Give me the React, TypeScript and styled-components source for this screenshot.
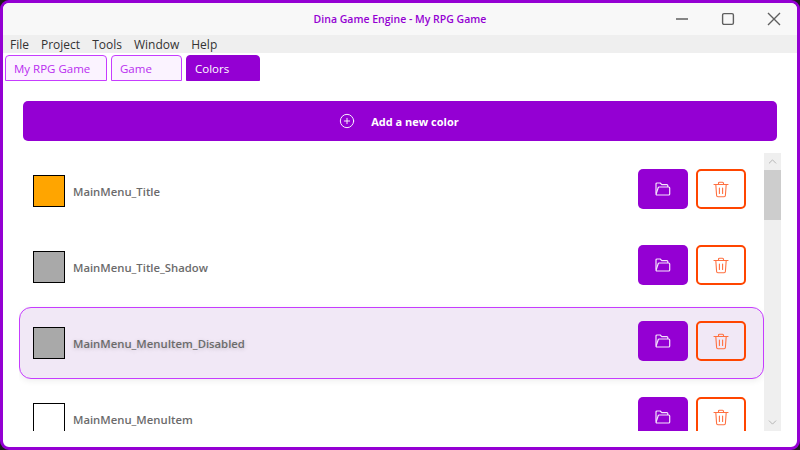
import React from 'react';
import styled, { createGlobalStyle } from 'styled-components';
import { CirclePlus, ChevronUp, ChevronDown } from 'lucide-react';

const PURPLE = '#9400d3';
const LILAC = '#c63cff';
const ORANGE = '#ff4500';

const colors = [
    { name: 'MainMenu_Title', swatch: '#ffa500' },
    { name: 'MainMenu_Title_Shadow', swatch: '#a9a9a9' },
    { name: 'MainMenu_MenuItem_Disabled', swatch: '#a9a9a9', hovered: true },
    { name: 'MainMenu_MenuItem', swatch: '#ffffff' },
];

const tabs = [
    { label: 'My RPG Game', width: 102 },
    { label: 'Game', width: 71 },
    { label: 'Colors', width: 74, active: true },
];

const menus = ['File', 'Project', 'Tools', 'Window', 'Help'];

const FolderIcon = () => (
    <svg width="16" height="14" viewBox="0 0 16 14" fill="none" stroke="currentColor" strokeWidth="1.2" strokeLinejoin="round">
        <path d="M1 11.5V2a1 1 0 0 1 1-1h3.2l1.6 1.6h5a1 1 0 0 1 1 1V5" />
        <path d="M1 12.2c.2.5.6.8 1.1.8h11.6a1 1 0 0 0 1-1V6a1 1 0 0 0-1-1H4.2a1 1 0 0 0-1 .8z" />
    </svg>
);

const TrashIcon = () => (
    <svg width="16" height="17" viewBox="0 0 16 17" fill="none" stroke="currentColor" strokeWidth="1.1" strokeLinecap="round" strokeLinejoin="round">
        <path d="M1 3.5h14" />
        <path d="M5.5 3.5V2.2a1 1 0 0 1 1-1h3a1 1 0 0 1 1 1v1.3" />
        <path d="M2.8 3.5l.8 11a1.3 1.3 0 0 0 1.3 1.2h6.2a1.3 1.3 0 0 0 1.3-1.2l.8-11" />
        <path d="M6.4 7v5.5M9.6 7v5.5" />
    </svg>
);

const App = () => {
    return (
        <>
            <GlobalStyle />
            <Desktop>
                <Window>
                    <TitleBar>
                        <Title>Dina Game Engine - My RPG Game</Title>
                        <WindowButtons>
                            <WindowButton>
                                <svg width="14" height="14" viewBox="0 0 14 14">
                                    <path d="M1 7h12" stroke="#5f5f5f" strokeWidth="1.4" />
                                </svg>
                            </WindowButton>
                            <WindowButton>
                                <svg width="14" height="14" viewBox="0 0 14 14">
                                    <rect x="1.6" y="1.6" width="10.8" height="10.8" rx="1.4" fill="none" stroke="#5f5f5f" strokeWidth="1.4" />
                                </svg>
                            </WindowButton>
                            <WindowButton>
                                <svg width="14" height="14" viewBox="0 0 14 14">
                                    <path d="M1 1l12 12M13 1L1 13" stroke="#5f5f5f" strokeWidth="1.4" />
                                </svg>
                            </WindowButton>
                        </WindowButtons>
                    </TitleBar>
                    <MenuBar>
                        {menus.map((item) => (
                            <MenuItem key={item}>{item}</MenuItem>
                        ))}
                    </MenuBar>
                    <TabStrip>
                        {tabs.map((tab) => (
                            <Tab key={tab.label} $width={tab.width} $active={tab.active}>
                                {tab.label}
                            </Tab>
                        ))}
                    </TabStrip>
                    <Content>
                        <AddButton>
                            <CirclePlus size={16} strokeWidth={1.4} />
                            <span>Add a new color</span>
                        </AddButton>
                        <ListArea>
                            <List>
                                {colors.map((color) => (
                                    <Row key={color.name} $hovered={color.hovered}>
                                        <Swatch $color={color.swatch} />
                                        <ColorName $hovered={color.hovered}>{color.name}</ColorName>
                                        <OpenButton>
                                            <FolderIcon />
                                        </OpenButton>
                                        <DeleteButton>
                                            <TrashIcon />
                                        </DeleteButton>
                                    </Row>
                                ))}
                            </List>
                            <ScrollBar>
                                <ScrollArrow>
                                    <ChevronUp size={13} strokeWidth={1.5} />
                                </ScrollArrow>
                                <ScrollThumb />
                                <ScrollTrack />
                                <ScrollArrow>
                                    <ChevronDown size={13} strokeWidth={1.5} />
                                </ScrollArrow>
                            </ScrollBar>
                        </ListArea>
                    </Content>
                </Window>
            </Desktop>
        </>
    );
};

export default App;

const GlobalStyle = createGlobalStyle`
    html, body {
        margin: 0;
        padding: 0;
        width: 800px;
        height: 450px;
        overflow: hidden;
        background: #1c1c1c;
    }
    * {
        box-sizing: border-box;
    }
`;

const Desktop = styled.div`
    width: 800px;
    height: 450px;
    background: #1c1c1c;
    font-family: 'Open Sans', 'Noto Sans', sans-serif;
`;

const Window = styled.div`
    width: 800px;
    height: 450px;
    display: flex;
    flex-direction: column;
    border: 3px solid ${PURPLE};
    border-radius: 9px;
    background: #ffffff;
    overflow: hidden;
`;

const TitleBar = styled.div`
    height: 32px;
    flex: none;
    position: relative;
    display: flex;
    align-items: center;
    justify-content: center;
    background: #f8f8f8;
`;

const Title = styled.div`
    font-size: 10.5px;
    font-weight: 600;
    color: ${PURPLE};
`;

const WindowButtons = styled.div`
    position: absolute;
    right: 0;
    top: 0;
    display: flex;
`;

const WindowButton = styled.div`
    width: 46px;
    height: 32px;
    display: flex;
    align-items: center;
    justify-content: center;
`;

const MenuBar = styled.div`
    height: 18px;
    flex: none;
    display: flex;
    align-items: center;
    padding-left: 1px;
    background: #efefef;
`;

const MenuItem = styled.div`
    padding: 0 6px;
    font-size: 12px;
    color: #333333;
`;

const TabStrip = styled.div`
    height: 28px;
    flex: none;
    display: flex;
    align-items: flex-end;
    gap: 4px;
    padding-left: 2px;
`;

const Tab = styled.div<{ $width: number; $active?: boolean }>`
    width: ${(p) => p.$width}px;
    height: 26px;
    display: flex;
    align-items: center;
    padding-left: 8px;
    font-size: 11.5px;
    border: 1px solid ${(p) => (p.$active ? PURPLE : LILAC)};
    border-radius: 4px 4px 0 0;
    background: ${(p) => (p.$active ? PURPLE : '#fbf3ff')};
    color: ${(p) => (p.$active ? '#ffffff' : '#b92cf0')};
`;

const Content = styled.div`
    flex: 1;
    min-height: 0;
    display: flex;
    flex-direction: column;
    padding: 20px 16px 16px 16px;
`;

const AddButton = styled.div`
    height: 40px;
    flex: none;
    margin: 0 4px;
    padding-right: 2px;
    display: flex;
    align-items: center;
    justify-content: center;
    gap: 16px;
    border-radius: 5px;
    background: ${PURPLE};
    color: #ffffff;
    font-size: 11px;
    font-weight: 700;
`;

const ListArea = styled.div`
    flex: 1;
    min-height: 0;
    margin-top: 12px;
    display: flex;
`;

const List = styled.div`
    flex: 1;
    min-width: 0;
    overflow: hidden;
    display: flex;
    flex-direction: column;
    gap: 4px;
    padding-top: 2px;
`;

const Row = styled.div<{ $hovered?: boolean }>`
    height: 72px;
    flex: none;
    display: flex;
    align-items: center;
    padding: 0 17px 0 13px;
    border: 1px solid ${(p) => (p.$hovered ? LILAC : 'transparent')};
    border-radius: 12px;
    background: ${(p) => (p.$hovered ? '#f1e8f6' : 'transparent')};
    box-shadow: ${(p) => (p.$hovered ? '0 2px 6px rgba(0, 0, 0, 0.07)' : 'none')};
`;

const Swatch = styled.div<{ $color: string }>`
    width: 32px;
    height: 32px;
    flex: none;
    border: 1px solid #000000;
    background: ${(p) => p.$color};
`;

const ColorName = styled.div<{ $hovered?: boolean }>`
    flex: 1;
    margin-left: 8px;
    font-size: 11.3px;
    font-weight: 600;
    color: #6b6b6b;
    text-shadow: ${(p) => (p.$hovered ? '0 1px 4px rgba(0, 0, 0, 0.2)' : 'none')};
`;

const OpenButton = styled.div`
    width: 50px;
    height: 40px;
    flex: none;
    margin-top: -4px;
    display: flex;
    align-items: center;
    justify-content: center;
    border-radius: 5px;
    background: ${PURPLE};
    color: #f4e4fb;
`;

const DeleteButton = styled.div`
    width: 50px;
    height: 40px;
    flex: none;
    margin: -4px 0 0 8px;
    display: flex;
    align-items: center;
    justify-content: center;
    border: 2px solid ${ORANGE};
    border-radius: 5px;
    color: #ff7040;
`;

const ScrollBar = styled.div`
    width: 17px;
    flex: none;
    display: flex;
    flex-direction: column;
    background: #efefef;
`;

const ScrollArrow = styled.div`
    height: 17px;
    flex: none;
    display: flex;
    align-items: center;
    justify-content: center;
    color: #a8a8a8;
`;

const ScrollThumb = styled.div`
    height: 50px;
    flex: none;
    background: #cdcdcd;
`;

const ScrollTrack = styled.div`
    flex: 1;
`;
